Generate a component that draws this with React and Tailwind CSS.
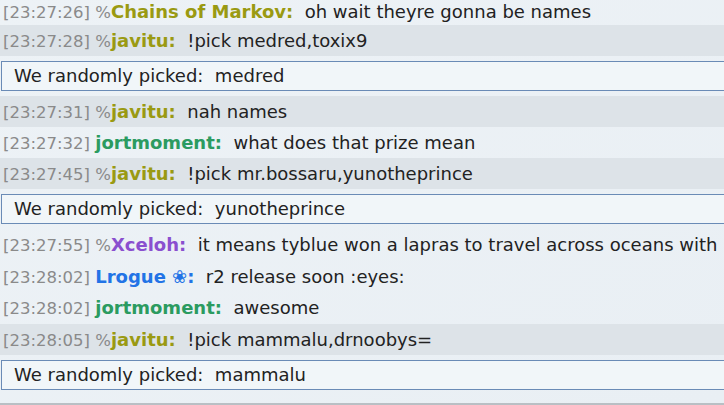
import React from "react";

const rows = [
  { t: "23:27:26", pre: "%", name: "Chains of Markov", color: "text-[#9a9a12]", msg: "oh wait theyre gonna be names", gray: false, first: true },
  { t: "23:27:28", pre: "%", name: "javitu", color: "text-[#9a9a12]", msg: "!pick medred,toxix9", gray: true },
  { box: "medred" },
  { t: "23:27:31", pre: "%", name: "javitu", color: "text-[#9a9a12]", msg: "nah names", gray: true },
  { t: "23:27:32", pre: "", name: "jortmoment", color: "text-[#2b9b60]", msg: "what does that prize mean", gray: false },
  { t: "23:27:45", pre: "%", name: "javitu", color: "text-[#9a9a12]", msg: "!pick mr.bossaru,yunotheprince", gray: true },
  { box: "yunotheprince" },
  { t: "23:27:55", pre: "%", name: "Xceloh", color: "text-[#8a4fcf]", msg: "it means tyblue won a lapras to travel across oceans with", gray: false, tall: true },
  { t: "23:28:02", pre: "", name: "Lrogue \u2740", color: "text-[#2273e6]", msg: "r2 release soon :eyes:", gray: false, tall: true },
  { t: "23:28:02", pre: "", name: "jortmoment", color: "text-[#2b9b60]", msg: "awesome", gray: false, tall: true },
  { t: "23:28:05", pre: "%", name: "javitu", color: "text-[#9a9a12]", msg: "!pick mammalu,drnoobys=", gray: true, tall: true },
  { box: "mammalu" },
];

export default function App() {
  return (
    <div
      className="w-[724px] h-[405px] overflow-hidden bg-gradient-to-br from-[#edf2f6] to-[#e9eff4] text-[18px] text-[#222]"
      style={{ fontFamily: '"DejaVu Sans", Verdana, sans-serif' }}
    >
      <div className="flex flex-col">
        {rows.map((r, i) =>
          r.box ? (
            <div key={i} className="py-[5px]">
              <div className="ml-[1px] mr-[-4px] h-[30px] border border-[#6a8bb6] bg-[#f1f6f9] pl-[12px] leading-[28px] whitespace-nowrap">
                We randomly picked:&nbsp; {r.box}
              </div>
            </div>
          ) : (
            <div
              key={i}
              className={`whitespace-nowrap pl-[3px] ${r.first ? "h-[25px] leading-[23px]" : r.tall ? "h-[31.5px] leading-[32px]" : "h-[31px] leading-[32px]"} ${r.gray ? "bg-[#dde3e8]" : ""}`}
            >
              <span className="text-[16.5px] text-[#8a8a8a]">[{r.t}] </span>
              {r.pre && <span className="text-[16.5px] text-[#8a8a8a]">{r.pre}</span>}
              <span className={`font-bold ${r.color}`}>{r.name}:</span>
              <span>&nbsp; {r.msg}</span>
            </div>
          )
        )}
        <div className="mt-[8px] h-[2px] bg-[#b9bfc4]" />
      </div>
    </div>
  );
}
